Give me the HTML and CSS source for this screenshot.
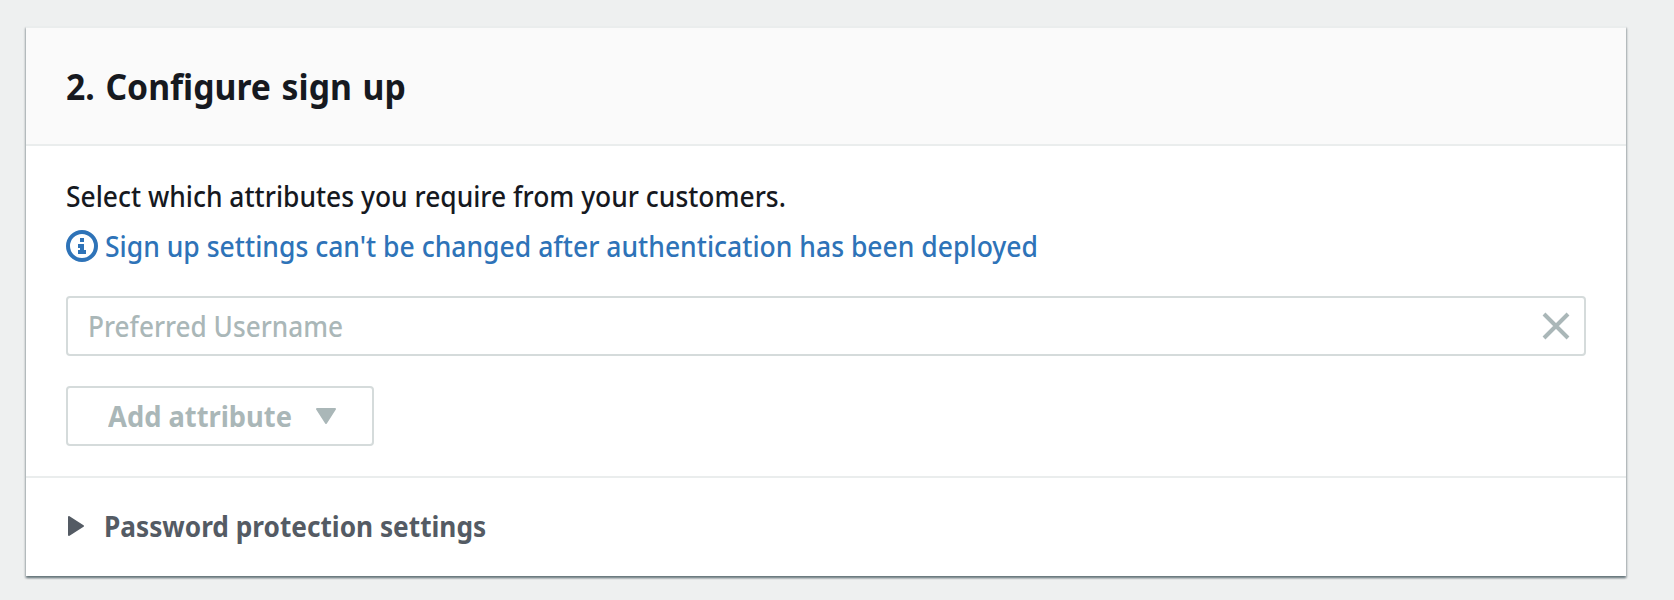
FILE: index.html
```html
<!DOCTYPE html>
<html lang="en">
<head>
<meta charset="utf-8">
<title>Configure sign up</title>
<link rel="stylesheet" href="styles.css">
</head>
<body>
<section class="card">
  <header class="card-header"><h2 class="title">2. Configure sign up</h2></header>
  <div class="card-body">
    <p class="lead"><span class="fit lead-text">Select which attributes you require from your customers.</span></p>
    <p class="info">
      <svg class="info-icon" width="32" height="32" viewBox="0 0 32 32"><circle cx="16" cy="16" r="14" fill="none" stroke="currentColor" stroke-width="4"/><path d="M14 8h4v4h-4zM12 14h6v6h2v4h-8v-4h2v-2h-2z" fill="currentColor"/></svg>
      <span class="fit info-text">Sign up settings can't be changed after authentication has been deployed</span>
    </p>
    <div class="field">
      <span class="fit field-text">Preferred Username</span>
      <svg width="28" height="28" viewBox="0 0 28 28"><path d="M2 2 26 26M26 2 2 26" stroke="currentColor" stroke-width="4"/></svg>
    </div>
    <button class="add" disabled>
      <span class="fit add-text">Add attribute</span>
      <svg width="20" height="16" viewBox="0 0 20 16"><path d="M1 1H19L10 15Z" fill="currentColor" stroke="currentColor" stroke-width="2" stroke-linejoin="round"/></svg>
    </button>
  </div>
  <div class="expander">
    <svg width="16" height="20" viewBox="0 0 16 20"><path d="M1 1V19L15 10Z" fill="currentColor" stroke="currentColor" stroke-width="2" stroke-linejoin="round"/></svg>
    <span class="fit expander-text">Password protection settings</span>
  </div>
</section>
</body>
</html>
```
FILE: styles.css
```css
* { box-sizing: border-box; }
body {
  margin: 0;
  height: 600px;
  padding: 26px 48px 24px 26px;
  overflow: hidden;
  background: #eef0f0;
  color: #16191f;
  font: 500 28px/44px "Noto Sans", "Open Sans", sans-serif;
}
h2, p { margin: 0; }
svg { display: block; flex: none; }
.fit { display: block; white-space: nowrap; transform-origin: 0 50%; }
.lead-text { transform: scaleX(.9435); }
.info-text { transform: scaleX(.9474); }
.field-text { transform: scaleX(.935); }
.add-text { transform: scaleX(.9745); }
.expander-text { transform: scaleX(.9365); }
.card {
  height: 550px;
  background: #fff;
  border-top: 2px solid #eaeded;
  box-shadow: 0 2px 2px 0 rgba(0, 28, 36, .3), 1px 2px 2px 0 rgba(0, 28, 36, .22), -1px 2px 2px 0 rgba(0, 28, 36, .22);
}
.card-header {
  display: flex;
  align-items: center;
  height: 118px;
  padding: 2px 40px 0;
  background: #fafafa;
  border-bottom: 2px solid #eaeded;
}
.title {
  font-size: 36px;
  line-height: 54px;
  font-weight: 700;
  white-space: nowrap;
  word-spacing: 2px;
  transform: scaleX(.937);
  transform-origin: 0 50%;
}
.card-body {
  height: 332px;
  padding: 28px 40px 0;
  border-bottom: 2px solid #eaeded;
}
.lead { height: 50px; }
.info { display: flex; align-items: center; gap: 7px; height: 44px; color: #2e73b8; }
.field {
  display: flex;
  align-items: center;
  justify-content: space-between;
  height: 60px;
  margin-top: 28px;
  padding: 0 14px 0 20px;
  border: 2px solid #d5dbdb;
  border-radius: 4px;
  color: #aab7b8;
}
.add {
  display: flex;
  align-items: center;
  justify-content: space-between;
  width: 308px;
  height: 60px;
  margin-top: 30px;
  padding: 0 36px 0 40px;
  background: #fff;
  border: 2px solid #d5dbdb;
  border-radius: 4px;
  color: #aab7b8;
  font: inherit;
  font-weight: 700;
}
.expander {
  display: flex;
  align-items: center;
  gap: 20px;
  height: 96px;
  padding: 0 42px;
  color: #545b64;
  font-weight: 700;
}
```
